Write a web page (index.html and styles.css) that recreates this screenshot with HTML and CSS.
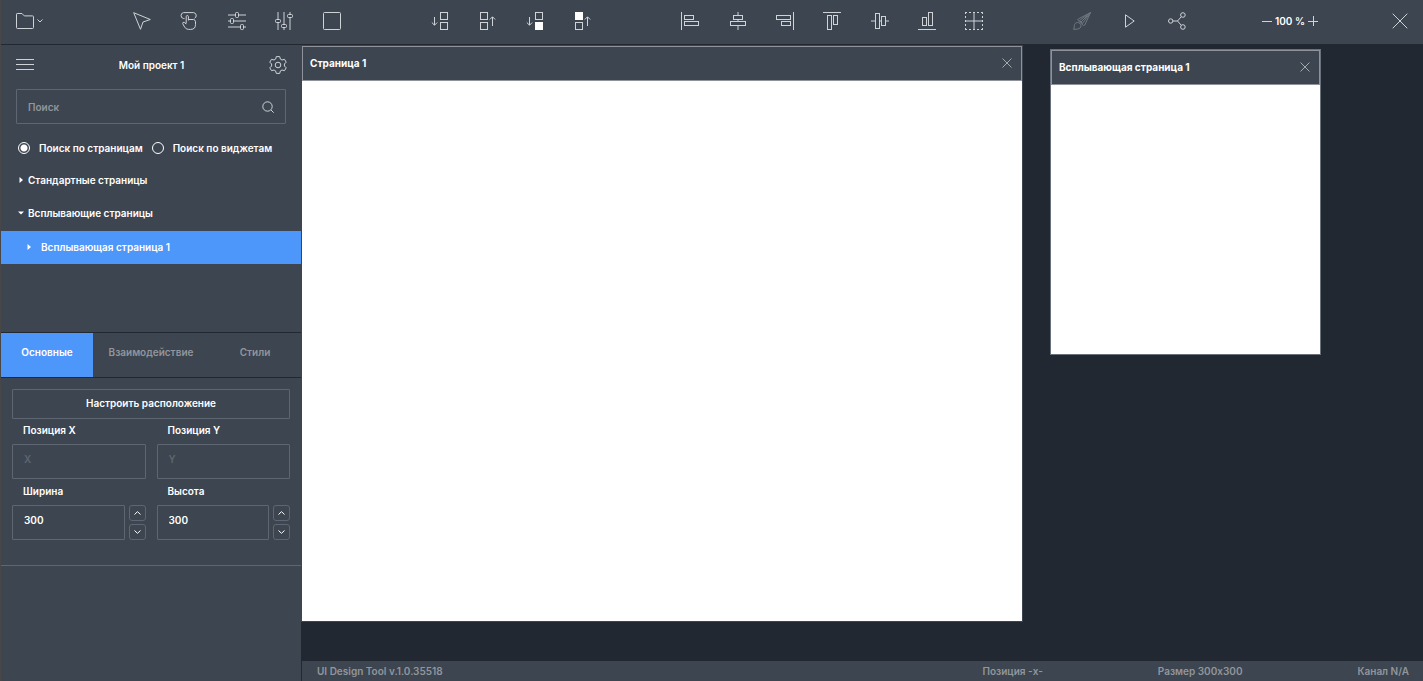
FILE: index.html
```html
<!DOCTYPE html>
<html lang="ru">
<head>
<meta charset="utf-8">
<title>UI Design Tool</title>
<link rel="stylesheet" href="styles.css">
</head>
<body>
<div class="app">
  <header class="toolbar">
    <button class="tool file" aria-label="Файл">
      <svg class="icon" viewBox="0 0 18 18"><path d="M.5 15.5V2.200Q.5 1.500 1.200 1.500H6L8.300 3.900H16.500Q17.500 3.900 17.500 4.800V15.500Q17.500 16.500 16.500 16.500H1.500Q.5 16.500 .5 15.500Z"/></svg>
      <svg class="caret" viewBox="0 0 6 4"><path d="M.5.5 3 3 5.500.5"/></svg>
    </button>
    <div class="group group-5">
      <button class="tool" aria-label="Выделение"><svg class="icon" viewBox="0 0 18 18"><path d="M.7.7 17.300 7.500 10 10 7.500 17.300Z"/></svg></button>
      <button class="tool" aria-label="Кнопка"><svg class="icon" viewBox="0 0 18 18"><path d="M4.500 6.500H3.500A3 3 0 0 1 3.500.6H13.500A3 3 0 0 1 14.500 6.300M6.200 11.500V4.700Q6.200 3.500 7.300 3.500T8.400 4.700V8.500M8.400 7.500H13.500Q15.500 7.800 15.500 9.800V12.500Q15.500 17.400 10.700 17.400H8.500Q6 17.400 4.600 15L2.700 11.700Q2.500 10 4.200 10.300L6.200 12"/></svg></button>
      <button class="tool" aria-label="Горизонтальный слайдер"><svg class="icon" viewBox="0 0 18 18"><path d="M0 3H7.500M10.500 3H18M0 9H2.500M5.500 9H18M0 15H12.500M15.500 15H18"/><rect x="7.500" y=".5" width="3" height="5" rx="1"/><rect x="2.500" y="6.500" width="3" height="5" rx="1"/><rect x="12.500" y="12.500" width="3" height="5" rx="1"/></svg></button>
      <button class="tool" aria-label="Вертикальный слайдер"><svg class="icon" viewBox="0 0 18 18"><path d="M3 0V7.500M3 10.500V18M9 0V12.500M9 15.500V18M15 0V2.500M15 5.500V18"/><rect x=".5" y="7.500" width="5" height="3" rx="1"/><rect x="6.500" y="12.500" width="5" height="3" rx="1"/><rect x="12.500" y="2.500" width="5" height="3" rx="1"/></svg></button>
      <button class="tool" aria-label="Прямоугольник"><svg class="icon" viewBox="0 0 18 18"><rect x=".5" y=".5" width="17" height="17" rx="1"/></svg></button>
    </div>
    <div class="group group-4">
      <button class="tool" aria-label="На слой ниже"><svg class="icon" viewBox="0 0 18 18"><path d="M3.500 5V13M.8 10.500 3.500 13.200 6.200 10.500"/><rect x="9.500" y=".5" width="7" height="7"/><rect x="9.500" y="10.500" width="7" height="7"/></svg></button>
      <button class="tool" aria-label="На слой выше"><svg class="icon" viewBox="0 0 18 18"><path d="M14.500 14V5M11.800 7.500 14.500 4.800 17.200 7.500"/><rect x="2.500" y=".5" width="7" height="7"/><rect x="2.500" y="10.500" width="7" height="7"/></svg></button>
      <button class="tool" aria-label="На задний план"><svg class="icon" viewBox="0 0 18 18"><path d="M3.500 5V13M.8 10.500 3.500 13.200 6.200 10.500"/><rect x="9.500" y=".5" width="7" height="7"/><rect class="solid" x="9.500" y="10.500" width="7" height="7"/></svg></button>
      <button class="tool" aria-label="На передний план"><svg class="icon" viewBox="0 0 18 18"><path d="M14.500 14V5M11.800 7.500 14.500 4.800 17.200 7.500"/><rect class="solid" x="2.500" y=".5" width="7" height="7"/><rect x="2.500" y="10.500" width="7" height="7"/></svg></button>
    </div>
    <div class="group group-7">
      <button class="tool" aria-label="По левому краю"><svg class="icon" viewBox="0 0 18 18"><path d="M.5 0V18"/><rect x="3.500" y="3.500" width="9" height="4"/><rect x="3.500" y="9.500" width="14" height="4"/></svg></button>
      <button class="tool" aria-label="По центру"><svg class="icon" viewBox="0 0 18 18"><path d="M9 0V3.500M9 7.500V9.500M9 13.500V18"/><rect x="4.500" y="3.500" width="9" height="4"/><rect x="1.500" y="9.500" width="15" height="4"/></svg></button>
      <button class="tool" aria-label="По правому краю"><svg class="icon" viewBox="0 0 18 18"><path d="M17.500 0V18"/><rect x=".5" y="3.500" width="14" height="4"/><rect x="5.500" y="9.500" width="9" height="4"/></svg></button>
      <button class="tool" aria-label="По верхнему краю"><svg class="icon" viewBox="0 0 18 18"><path d="M0 .5H18"/><rect x="4.500" y="3.500" width="4" height="14"/><rect x="10.500" y="3.500" width="4" height="9"/></svg></button>
      <button class="tool" aria-label="По середине"><svg class="icon" viewBox="0 0 18 18"><path d="M0 9H4.500M8.500 9H10.500M14.500 9H18"/><rect x="4.500" y="1.500" width="4" height="15"/><rect x="10.500" y="4.500" width="4" height="9"/></svg></button>
      <button class="tool" aria-label="По нижнему краю"><svg class="icon" viewBox="0 0 18 18"><path d="M0 17.500H18"/><rect x="4.500" y="5.500" width="4" height="8"/><rect x="10.500" y=".5" width="4" height="13"/></svg></button>
      <button class="tool" aria-label="Сетка"><svg class="icon" viewBox="0 0 18 18"><path d="M9 0V18M0 9H18"/><path stroke-dasharray="2 2" d="M0 .5H18M0 17.500H18M.5 0V18M17.500 0V18"/></svg></button>
    </div>
    <div class="actions">
      <div class="group group-3">
        <button class="tool" disabled aria-label="Кисть"><svg class="icon" viewBox="0 0 18 18"><path d="M17.500.6 6.500 8.500 9.500 11.500ZM14.500 3.500 8 10M17.500.6 11.800 13 10.300 13.500 4.600 8 5.500 6.800ZM.6 17.300Q1.300 16 1.300 13.800C1.300 11.800 2.800 10.500 4.500 10.500S8 12 8 13.800 6.500 17 4.300 17Q2 17.500.6 17.300Z"/></svg></button>
        <button class="tool" aria-label="Запуск"><svg class="icon" viewBox="0 0 18 18"><path d="M4.500 2.800 13.200 9 4.500 15.200Z"/></svg></button>
        <button class="tool" aria-label="Поделиться"><svg class="icon" viewBox="0 0 18 18"><circle cx="2.700" cy="9" r="2.200"/><circle cx="14.900" cy="3" r="2.300"/><circle cx="14.900" cy="15" r="2.300"/><path d="M4.900 9H9.500L13.200 4.800M9.500 9 13.200 13.200"/></svg></button>
      </div>
      <div class="zoom">
        <button class="zoom-step" aria-label="Уменьшить"><svg viewBox="0 0 10 10"><path d="M0 5.500H10"/></svg></button>
        <span>100 %</span>
        <button class="zoom-step" aria-label="Увеличить"><svg viewBox="0 0 10 10"><path d="M0 5.500H10M5.500 0V10"/></svg></button>
      </div>
      <button class="tool close" aria-label="Закрыть"><svg class="icon" viewBox="0 0 18 18"><path d="M1.700 1.700 16.300 16.300M16.300 1.700 1.700 16.300"/></svg></button>
    </div>
  </header>

  <div class="workspace">
    <aside class="sidebar">
      <section class="pages">
        <div class="project">
          <button class="tool" aria-label="Меню"><svg class="icon" viewBox="0 0 18 18"><path d="M0 3.500H18M0 8.500H18M0 13.500H18"/></svg></button>
          <h1>Мой проект 1</h1>
          <button class="tool" aria-label="Настройки"><svg class="icon" viewBox="0 0 18 18"><circle cx="9" cy="9" r="2.800"/><path d="M7.300.6H10.700L11.400 3.100 13 4 15.500 3.300 17.200 6.200 15.400 8V10L17.200 11.800 15.500 14.700 13 14 11.400 14.900 10.700 17.400H7.300L6.600 14.900 5 14 2.500 14.700.8 11.800 2.600 10V8L.8 6.200 2.500 3.300 5 4 6.600 3.100Z" stroke-linejoin="round"/></svg></button>
        </div>
        <label class="search">
          <input type="search" placeholder="Поиск" aria-label="Поиск">
          <svg viewBox="0 0 12 12"><circle cx="5.500" cy="5.500" r="4.700"/><path d="M9 9 11.700 11.700"/></svg>
        </label>
        <div class="scope">
          <label><input type="radio" name="scope" checked>Поиск по страницам</label>
          <label><input type="radio" name="scope">Поиск по виджетам</label>
        </div>
        <div class="tree">
          <button class="node"><svg viewBox="0 0 6 6"><path d="M1.500 0 5 3 1.500 6Z"/></svg>Стандартные страницы</button>
          <button class="node"><svg viewBox="0 0 6 6"><path d="M0 1.500H6L3 4.500Z"/></svg>Всплывающие страницы</button>
          <button class="node selected"><svg viewBox="0 0 6 6"><path d="M1.500 0 5 3 1.500 6Z"/></svg>Всплывающая страница 1</button>
        </div>
      </section>
      <nav class="tabs">
        <button class="tab active">Основные</button>
        <button class="tab">Взаимодействие</button>
        <button class="tab">Стили</button>
      </nav>
      <form class="properties">
        <button type="button" class="arrange">Настроить расположение</button>
        <div class="fields">
          <div class="field">
            <label for="pos-x">Позиция X</label>
            <div class="control"><input id="pos-x" type="text" placeholder="X"></div>
          </div>
          <div class="field">
            <label for="pos-y">Позиция Y</label>
            <div class="control"><input id="pos-y" type="text" placeholder="Y"></div>
          </div>
          <div class="field">
            <label for="width">Ширина</label>
            <div class="control">
              <input id="width" type="text" value="300">
              <div class="stepper">
                <button type="button" aria-label="Увеличить ширину"><svg viewBox="0 0 7 4"><path d="M.5 3.500 3.500.7 6.500 3.500"/></svg></button>
                <button type="button" aria-label="Уменьшить ширину"><svg viewBox="0 0 7 4"><path d="M.5.5 3.500 3.300 6.500.5"/></svg></button>
              </div>
            </div>
          </div>
          <div class="field">
            <label for="height">Высота</label>
            <div class="control">
              <input id="height" type="text" value="300">
              <div class="stepper">
                <button type="button" aria-label="Увеличить высоту"><svg viewBox="0 0 7 4"><path d="M.5 3.500 3.500.7 6.500 3.500"/></svg></button>
                <button type="button" aria-label="Уменьшить высоту"><svg viewBox="0 0 7 4"><path d="M.5.5 3.500 3.300 6.500.5"/></svg></button>
              </div>
            </div>
          </div>
        </div>
      </form>
    </aside>

    <div class="stage">
      <main class="canvas">
        <section class="page page-main">
          <header class="page-head"><h2>Страница 1</h2><button aria-label="Закрыть страницу"><svg viewBox="0 0 10 10"><path d="M.5.5 9.500 9.500M9.500.5.5 9.500"/></svg></button></header>
          <div class="sheet"></div>
        </section>
        <section class="page page-popup">
          <header class="page-head"><h2>Всплывающая страница 1</h2><button aria-label="Закрыть страницу"><svg viewBox="0 0 10 10"><path d="M.5.5 9.500 9.500M9.500.5.5 9.500"/></svg></button></header>
          <div class="sheet"></div>
        </section>
      </main>
      <footer class="status">
        <span class="version">UI Design Tool v.1.0.35518</span>
        <span>Позиция -x-</span>
        <span>Размер 300x300</span>
        <span>Канал N/A</span>
      </footer>
    </div>
  </div>
</div>
</body>
</html>
```

FILE: styles.css
```css
:root {
  --panel: #3c4550;
  --dark: #222831;
  --line: #5e6771;
  --accent: #4d96fa;
  --icon: #d0d3d6;
  --muted: #92969c;
}

* { box-sizing: border-box; }

body {
  margin: 0;
  background: #484748;
  color: #fff;
  font: 600 10px/16px Inter, "Liberation Sans", sans-serif;
}

button, input {
  margin: 0;
  padding: 0;
  border: 0;
  background: none;
  color: inherit;
  font: inherit;
}

h1, h2 { margin: 0; font: inherit; }

svg { display: block; fill: none; stroke: var(--icon); }

.app {
  display: flex;
  flex-direction: column;
  min-height: 100vh;
  margin-left: 1px;
  border-bottom-left-radius: 3px;
  overflow: hidden;
  background: var(--panel);
}

/* Toolbar */
.toolbar {
  display: flex;
  align-items: center;
  justify-content: space-between;
  height: 45px;
  padding: 0 14px 2px 15px;
  border-bottom: 1px solid var(--dark);
}

.tool { display: grid; place-items: center; width: 24px; height: 24px; }
.tool:disabled { opacity: 0.35; }
.icon { width: 18px; height: 18px; }
.solid { fill: #fff; stroke: #fff; }
.file { display: flex; align-items: center; gap: 3px; width: 30px; }
.caret { width: 6px; height: 4px; }

.group { display: flex; justify-content: space-between; }
.group-3 { width: 119px; }
.group-4 { width: 167px; }
.group-5 { width: 214px; }
.group-7 { width: 308px; }

.actions { display: flex; align-items: center; gap: 73px; }
.zoom { display: flex; align-items: center; gap: 3px; white-space: nowrap; }
.zoom-step svg { width: 10px; height: 10px; }
.close { width: 18px; }

/* Sidebar */
.workspace { display: flex; flex: 1; }
.sidebar { display: flex; flex-direction: column; width: 300px; flex: none; }
.pages { height: 287px; }

.project {
  display: flex;
  align-items: center;
  justify-content: space-between;
  padding: 8px 11px 8px 12px;
}

.search {
  display: flex;
  align-items: center;
  height: 35px;
  margin: 4px 15px 0;
  padding: 0 11px;
  border: 1px solid var(--line);
  border-radius: 1px;
}
.search input { flex: 1; min-width: 0; outline: 0; }
.search input::placeholder { color: var(--muted); opacity: 1; }
.search svg { width: 12px; height: 12px; }

.scope { display: flex; gap: 9px; padding: 16px 17px 0; }
.scope label { display: flex; align-items: center; gap: 9px; white-space: nowrap; }
.scope input {
  appearance: none;
  width: 12px;
  height: 12px;
  border: 1px solid #fff;
  border-radius: 50%;
}
.scope input:checked { background: radial-gradient(circle, #fff 3px, transparent 4px); }

.tree { display: flex; flex-direction: column; padding-top: 7px; }
.node {
  display: flex;
  align-items: center;
  gap: 4px;
  height: 33px;
  padding-left: 17px;
  text-align: left;
}
.node svg { width: 6px; height: 6px; fill: #fff; stroke: none; }
.node.selected { gap: 9px; margin-top: 2px; padding: 0 0 2px 25px; background: var(--accent); }

.tabs {
  display: grid;
  grid-template-columns: 92px 1fr 92px;
  height: 46px;
  border: solid var(--dark);
  border-width: 1px 0;
}
.tab { padding-bottom: 6px; color: var(--muted); }
.tab.active { background: var(--accent); color: #fff; }

.properties { padding: 11px 11px 21px; border-bottom: 1px solid var(--line); }
.arrange {
  display: block;
  width: 100%;
  height: 30px;
  padding-bottom: 2px;
  border: 1px solid var(--line);
  border-radius: 1px;
}
.fields { display: grid; grid-template-columns: 1fr 1fr; column-gap: 11px; padding-top: 3px; }
.field { min-width: 0; }
.field > label { display: block; padding: 0 0 6px 11px; }
.control { display: flex; gap: 4px; padding-bottom: 4px; }
.control > input {
  flex: 1;
  min-width: 0;
  height: 35px;
  padding: 0 11px 5px;
  border: 1px solid var(--line);
  border-radius: 1px;
}
.control > input::placeholder { color: #5e6670; opacity: 1; }
.stepper { display: flex; flex-direction: column; justify-content: space-between; }
.stepper button {
  display: grid;
  place-items: center;
  width: 17px;
  height: 16px;
  border: 1px solid var(--line);
  border-radius: 3px;
}
.stepper svg { width: 7px; height: 4px; stroke: #fff; }

/* Canvas */
.stage { display: flex; flex: 1; flex-direction: column; min-width: 0; background: var(--dark); }
.canvas { position: relative; flex: 1; overflow: hidden; }
.page { position: absolute; border: 1px solid var(--panel); }
.page-main { left: 0; top: 0; width: 722px; }
.page-popup { left: 749px; top: 4px; width: 271px; border-color: #69717c; }
.page-head {
  display: flex;
  align-items: center;
  justify-content: space-between;
  height: 35px;
  padding: 0 9px 1px 7px;
  border: 1px solid #8f9399;
  background: var(--panel);
  font-weight: 700;
}
.page-head svg { width: 10px; height: 10px; stroke: #a5a9ae; }
.page-main .sheet { height: 540px; background: #fff; }
.page-popup .sheet { height: 269px; background: #fff; }

.status {
  display: flex;
  align-items: center;
  gap: 115px;
  height: 20px;
  margin-left: 1px;
  padding: 0 14px 0 15px;
  background: var(--panel);
  color: var(--muted);
}
.version { flex: 1; }
```
